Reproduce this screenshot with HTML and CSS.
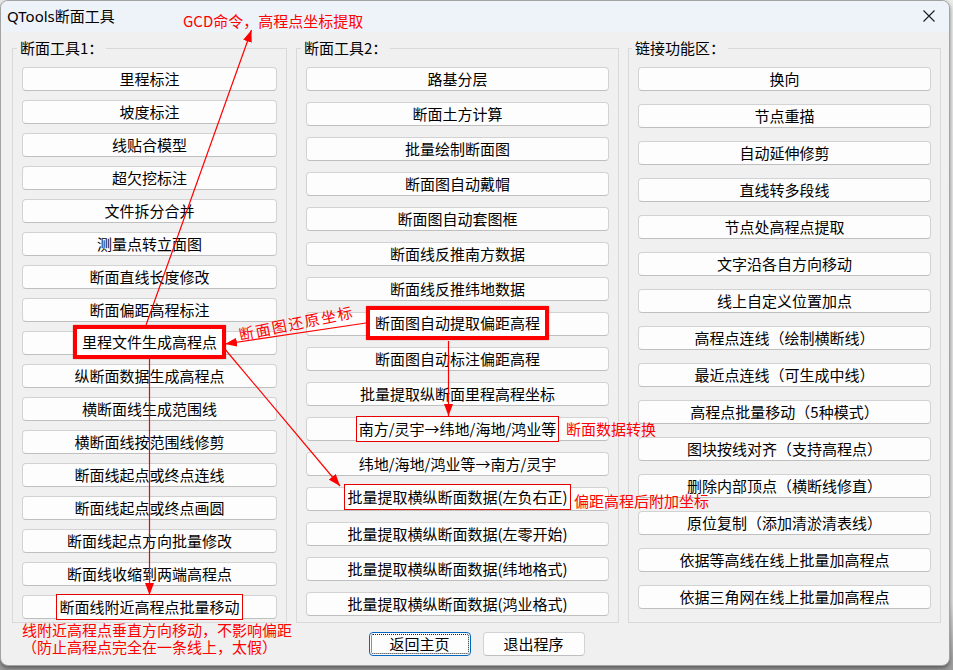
FILE: index.html
```html
<!DOCTYPE html>
<html lang="zh-CN">
<head>
<meta charset="utf-8">
<title>QTools断面工具</title>
<link rel="stylesheet" href="styles.css">
</head>
<body>
<div class="screen">
  <div class="window">
    <div class="titlebar">
      <span class="title">QTools断面工具</span>
      <span class="close" aria-label="关闭">
        <svg width="12" height="12" viewBox="0 0 12 12"><path d="M0.5 0.5 L11.5 11.5 M11.5 0.5 L0.5 11.5" stroke="#1b1b1b" stroke-width="1.1" fill="none"/></svg>
      </span>
    </div>
    <div class="content">
      <div class="groups">
        <section class="group g1">
          <div class="group-title">断面工具1：</div>
          <div class="btns">
            <div class="btn">里程标注</div>
            <div class="btn">坡度标注</div>
            <div class="btn">线贴合模型</div>
            <div class="btn">超欠挖标注</div>
            <div class="btn">文件拆分合并</div>
            <div class="btn">测量点转立面图</div>
            <div class="btn">断面直线长度修改</div>
            <div class="btn">断面偏距高程标注</div>
            <div class="btn"><span class="hl-thick">里程文件生成高程点</span></div>
            <div class="btn">纵断面数据生成高程点</div>
            <div class="btn">横断面线生成范围线</div>
            <div class="btn">横断面线按范围线修剪</div>
            <div class="btn">断面线起点或终点连线</div>
            <div class="btn">断面线起点或终点画圆</div>
            <div class="btn">断面线起点方向批量修改</div>
            <div class="btn">断面线收缩到两端高程点</div>
            <div class="btn"><span class="hl-thin">断面线附近高程点批量移动</span></div>
          </div>
        </section>
        <section class="group g2">
          <div class="group-title">断面工具2：</div>
          <div class="btns">
            <div class="btn">路基分层</div>
            <div class="btn">断面土方计算</div>
            <div class="btn">批量绘制断面图</div>
            <div class="btn">断面图自动戴帽</div>
            <div class="btn">断面图自动套图框</div>
            <div class="btn">断面线反推南方数据</div>
            <div class="btn">断面线反推纬地数据</div>
            <div class="btn"><span class="hl-thick">断面图自动提取偏距高程</span></div>
            <div class="btn">断面图自动标注偏距高程</div>
            <div class="btn">批量提取纵断面里程高程坐标</div>
            <div class="btn"><span class="hl-thin">南方/灵宇→纬地/海地/鸿业等</span></div>
            <div class="btn">纬地/海地/鸿业等→南方/灵宇</div>
            <div class="btn"><span class="hl-thin up">批量提取横纵断面数据(左负右正)</span></div>
            <div class="btn">批量提取横纵断面数据(左零开始)</div>
            <div class="btn">批量提取横纵断面数据(纬地格式)</div>
            <div class="btn">批量提取横纵断面数据(鸿业格式)</div>
          </div>
        </section>
        <section class="group g3">
          <div class="group-title">链接功能区：</div>
          <div class="btns">
            <div class="btn">换向</div>
            <div class="btn">节点重描</div>
            <div class="btn">自动延伸修剪</div>
            <div class="btn">直线转多段线</div>
            <div class="btn">节点处高程点提取</div>
            <div class="btn">文字沿各自方向移动</div>
            <div class="btn">线上自定义位置加点</div>
            <div class="btn">高程点连线（绘制横断线）</div>
            <div class="btn">最近点连线（可生成中线）</div>
            <div class="btn">高程点批量移动（5种模式）</div>
            <div class="btn">图块按线对齐（支持高程点）</div>
            <div class="btn">删除内部顶点（横断线修直）</div>
            <div class="btn">原位复制（添加清淤清表线）</div>
            <div class="btn">依据等高线在线上批量加高程点</div>
            <div class="btn">依据三角网在线上批量加高程点</div>
          </div>
        </section>
      </div>
      <div class="footer">
        <div class="btn wide focused">返回主页</div>
        <div class="btn wide">退出程序</div>
      </div>
    </div>
  </div>

  <svg class="overlay" width="953" height="670" viewBox="0 0 953 670">
    <defs>
      <marker id="ah" markerUnits="userSpaceOnUse" markerWidth="12" markerHeight="9" refX="12" refY="4.5" orient="auto">
        <path d="M0,0 L12,4.5 L0,9 z" fill="#ff0000"/>
      </marker>
    </defs>
    <g stroke="#ff0000" stroke-width="1.2" fill="none">
      <path d="M146,325 L251.5,30" marker-end="url(#ah)"/>
      <path d="M149.5,359 L149.5,595" marker-end="url(#ah)"/>
      <path d="M366,323 L225,344" marker-end="url(#ah)"/>
      <path d="M224,348 L340,486" marker-end="url(#ah)"/>
      <path d="M448.5,341 L448.5,416" marker-end="url(#ah)"/>
    </g>
  </svg>

  <div class="note note-gcd">GCD命令，高程点坐标提取</div>
  <div class="note note-restore">断面图还原坐标</div>
  <div class="note note-convert">断面数据转换</div>
  <div class="note note-offset">偏距高程后附加坐标</div>
  <div class="note note-bottom">
    <div class="note-line">线附近高程点垂直方向移动，不影响偏距</div>
    <div class="note-line">（防止高程点完全在一条线上，太假）</div>
  </div>
</div>
</body>
</html>
```

FILE: styles.css
```css
* { box-sizing: border-box; }

html, body {
  margin: 0;
  padding: 0;
}

body {
  background: #e9e9e9;
  font-family: "Noto Sans CJK SC", "Noto Sans", sans-serif;
  color: #000;
}

.screen {
  position: relative;
  width: 953px;
  height: 670px;
  overflow: hidden;
  background: linear-gradient(#ececec, #e2e2e2 90%, #9a9a9a);
}

.window {
  width: 950px;
  height: 666px;
  border: 1px solid #a3a3a3;
  border-radius: 8px;
  background: #f0f0f0;
  overflow: hidden;
  display: flex;
  flex-direction: column;
  box-shadow: 0 2px 4px rgba(0, 0, 0, 0.45);
}

.titlebar {
  height: 31px;
  flex: none;
  background: #eef3f9;
  display: flex;
  align-items: center;
  justify-content: space-between;
  padding: 0 14px 0 6px;
}

.title {
  font-family: "Noto Sans", "Noto Sans CJK SC", sans-serif;
  font-size: 15px;
  line-height: 20px;
  color: #000;
  margin-top: -2px;
}

.close {
  display: flex;
  width: 12px;
  height: 12px;
  margin-top: -1px;
}

.content {
  flex: 1;
  padding: 16px 8px 0 11px;
  display: flex;
  flex-direction: column;
}

.groups {
  display: grid;
  grid-template-columns: 275px 323px 313px;
  column-gap: 9px;
  height: 575px;
}

.group {
  border: 1px solid #d9d9d9;
  padding: 0 9px;
  display: flex;
  flex-direction: column;
}

.group-title {
  align-self: flex-start;
  margin: -11px 0 0 -5px;
  padding: 0 3px;
  background: #f0f0f0;
  font-size: 15px;
  line-height: 20px;
}

.btns {
  margin-top: 9px;
  display: flex;
  flex-direction: column;
}

.g1 .btns { gap: 9px; }
.g2 .btns { gap: 11px; }
.g3 .btns { gap: 13px; }
.g3 .group-title { margin-left: -6px; }

.btn {
  height: 24px;
  background: #fdfdfd;
  border: 1px solid #d2d2d2;
  border-bottom-color: #bfbfbf;
  border-radius: 4px;
  display: flex;
  align-items: center;
  justify-content: center;
  font-size: 15px;
  line-height: 22px;
  white-space: nowrap;
}

.hl-thick {
  display: inline-block;
  border: 4px solid #ff0000;
  border-radius: 1px;
  background: #fff;
  padding: 2px 5px;
  line-height: 22px;
  margin-bottom: 2px;
  box-shadow: 0 0 1px #900;
}

.hl-thin {
  display: inline-block;
  border: 1px solid #e60000;
  background: #fff;
  padding: 1px 2px;
  line-height: 22px;
}

.hl-thin.up { margin-bottom: 4px; }

.footer {
  margin-top: 9px;
  display: flex;
  justify-content: center;
  gap: 12px;
}

.btn.wide {
  width: 102px;
}

.btn.focused {
  border: 1px solid #0067c0;
  outline: 1px dotted #222;
  outline-offset: -3px;
}

.overlay {
  position: absolute;
  left: 0;
  top: 0;
  pointer-events: none;
}

.note {
  position: absolute;
  color: #ff0000;
  font-size: 15px;
  line-height: 20px;
  white-space: nowrap;
}

.note-gcd { left: 183px; top: 11px; }

.note-restore {
  left: 238px;
  top: 313px;
  letter-spacing: 1.7px;
  transform: rotate(-11.5deg);
  transform-origin: center;
}

.note-convert { left: 566px; top: 419px; }
.note-offset { left: 574px; top: 491px; }

.note-bottom {
  left: 22px;
  top: 621px;
  display: flex;
  flex-direction: column;
}

.note-line {
  height: 17px;
  line-height: 17px;
}
```
